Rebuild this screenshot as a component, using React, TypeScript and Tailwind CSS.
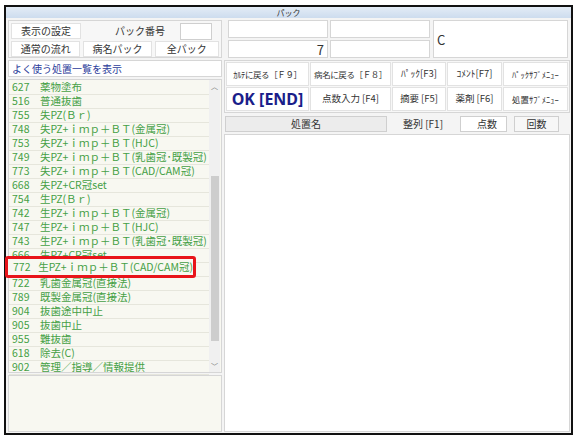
import React from "react";

const F = { fontFamily: '"Noto Sans CJK JP", "Noto Sans", sans-serif' };

const rows: [string, string][] = [
  ["627", "薬物塗布"],
  ["516", "普通抜歯"],
  ["755", "失PZ(Ｂｒ)"],
  ["748", "失PZ+ｉｍｐ＋ＢＴ(金属冠)"],
  ["753", "失PZ+ｉｍｐ＋ＢＴ(HJC)"],
  ["749", "失PZ+ｉｍｐ＋ＢＴ(乳歯冠･既製冠)"],
  ["773", "失PZ+ｉｍｐ＋ＢＴ(CAD/CAM冠)"],
  ["668", "失PZ+CR冠set"],
  ["754", "生PZ(Ｂｒ)"],
  ["742", "生PZ+ｉｍｐ＋ＢＴ(金属冠)"],
  ["747", "生PZ+ｉｍｐ＋ＢＴ(HJC)"],
  ["743", "生PZ+ｉｍｐ＋ＢＴ(乳歯冠･既製冠)"],
  ["666", "生PZ+CR冠set"],
  ["772", ""],
  ["722", "乳歯金属冠(直接法)"],
  ["789", "既製金属冠(直接法)"],
  ["904", "抜歯途中中止"],
  ["905", "抜歯中止"],
  ["955", "難抜歯"],
  ["618", "除去(C)"],
  ["902", "管理／指導／情報提供"],
];

function Btn({ children, className = "" }: { children: React.ReactNode; className?: string }) {
  return (
    <div className={`flex items-center justify-center bg-white border border-[#e2e2e2] text-[#333] leading-none whitespace-nowrap overflow-hidden ${className}`}>
      {children}
    </div>
  );
}

export default function App() {
  return (
    <div className="w-[577px] h-[439px] bg-white relative overflow-hidden" style={F}>
      <div className="absolute left-[4px] top-[5px] w-[569px] h-[430px] border-2 border-[#111] bg-[#f4f4f4] flex flex-col">
        {/* title bar */}
        <div className="h-[11px] bg-gradient-to-b from-[#e3ecf6] to-[#cddcee] flex items-center justify-center text-[8px] text-[#333] leading-none">
          パック
        </div>
        <div className="flex-1 flex gap-[2px] pl-[2px] pr-[1px] pt-[2px] pb-[1px]">
          {/* left column */}
          <div className="w-[214px] flex flex-col gap-[2px]">
            <div className="h-[38px] border border-[#d6d6d6] bg-[#f7f7f7] p-[2px] flex flex-col gap-[2px]">
              <div className="flex h-[16px] items-center">
                <Btn className="w-[70px] h-[16px] text-[10px]">表示の設定</Btn>
                <div className="w-[85px] text-right text-[10px] text-[#333] leading-none pr-[1px]">パック番号</div>
                <div className="ml-[14px] w-[32px] h-[17px] bg-white border border-[#cfcfcf]" />
              </div>
              <div className="flex h-[16px] gap-[3px]">
                <Btn className="w-[70px] h-[16px] text-[10px]">通常の流れ</Btn>
                <Btn className="w-[69px] h-[16px] text-[10px]">病名パック</Btn>
                <Btn className="w-[65px] h-[16px] text-[10px]">全パック</Btn>
              </div>
            </div>
            <div className="h-[17px] border border-[#d6d6d6] bg-white flex items-center pl-[3px] text-[10px] text-[#2c3c9a] leading-none">
              よく使う処置一覧を表示
            </div>
            <div className="h-[294px] border border-[#d6d6d6] bg-[#f8f8f1] flex relative">
              <div className="flex-1 pt-[1px]">
                {rows.map(([n, t]) => (
                  <div key={n} className="h-[14px] flex items-center border-b border-[#e6e6dc] text-[10.5px] text-[#45a045] leading-none whitespace-nowrap">
                    {t ? (
                      <>
                        <span className="w-[31px] pl-[3px]">{n}</span>
                        <span>{t}</span>
                      </>
                    ) : null}
                  </div>
                ))}
              </div>
              <div className="w-[11px] bg-[#f0f0f0] flex flex-col items-center mr-[1px]">
                <div className="h-[12px] text-[7px] text-[#777] leading-[12px]">︿</div>
                <div className="h-[84px]" />
                <div className="w-[8px] h-[165px] bg-[#cdcdcd]" />
                <div className="flex-1" />
                <div className="h-[12px] text-[7px] text-[#777] leading-[12px]">﹀</div>
              </div>
              {/* highlight annotation */}
              <div className="absolute left-[-4px] top-[176px] w-[191px] h-[22px] border-[3px] border-[#e8141a] rounded-[3px] bg-[#f8f8f1] flex items-center text-[10.5px] text-[#45a045] leading-none whitespace-nowrap">
                <span className="w-[32px] pl-[5px]">772</span>
                <span>生PZ+ｉｍｐ＋ＢＴ(CAD/CAM冠)</span>
              </div>
            </div>
            <div className="flex-1 border border-[#d6d6d6] bg-[#f8f8f1]" />
          </div>

          {/* right column */}
          <div className="flex-1 flex flex-col gap-[2px]">
            <div className="h-[38px] flex gap-[3px] pl-[4px]">
              <div className="grid grid-cols-2 grid-rows-2 gap-[2px] w-[202px]">
                <div className="bg-white border border-[#d6d6d6]" />
                <div className="bg-white border border-[#d6d6d6]" />
                <div className="bg-white border border-[#d6d6d6] flex items-center justify-end pr-[3px] text-[13px] text-[#333] leading-none">7</div>
                <div className="bg-white border border-[#d6d6d6]" />
              </div>
              <div className="flex-1 mr-[2px] bg-white border border-[#d6d6d6] flex items-center pl-[3px] text-[13px] text-[#333] leading-none">
                C
              </div>
            </div>
            <div className="h-[53px] border border-[#d6d6d6] bg-[#f7f7f7] p-[1px] flex flex-col gap-[1px]">
              <div className="flex-1 flex gap-[1px]">
                <Btn className="w-[83px] text-[8.5px] tracking-[-0.4px]">ｶﾙﾃに戻る［Ｆ９］</Btn>
                <Btn className="w-[81px] text-[8.5px] tracking-[-0.4px]">病名に戻る［Ｆ８］</Btn>
                <Btn className="w-[54px] text-[9.5px]">ﾊﾟｯｸ[F3]</Btn>
                <Btn className="w-[55px] text-[9.5px]">ｺﾒﾝﾄ[F7]</Btn>
                <Btn className="flex-1 text-[8.5px]">ﾊﾟｯｸｻﾌﾞﾒﾆｭｰ</Btn>
              </div>
              <div className="flex-1 flex gap-[1px]">
                <Btn className="w-[83px]">
                  <span className="text-[16px] font-bold text-[#1a1e8a]" style={{ fontFamily: '"Noto Sans", "Noto Sans CJK JP", sans-serif' }}>OK [END]</span>
                </Btn>
                <Btn className="w-[81px] text-[9.5px]">点数入力 [F4]</Btn>
                <Btn className="w-[54px] text-[9.5px]">摘要 [F5]</Btn>
                <Btn className="w-[55px] text-[9.5px]">薬剤 [F6]</Btn>
                <Btn className="flex-1 text-[8.5px]">処置ｻﾌﾞﾒﾆｭｰ</Btn>
              </div>
            </div>
            <div className="h-[17px] flex items-center text-[10px] text-[#333] leading-none">
              <div className="w-[162px] h-[16px] ml-[1px] bg-[#ececec] border border-[#cfcfcf] flex items-center justify-center">処置名</div>
              <div className="w-[68px] h-[16px] flex items-center justify-center ml-[2px]">整列 [F1]</div>
              <div className="w-[47px] h-[16px] ml-[3px] bg-white border border-[#cfcfcf] flex items-center justify-end pr-[9px]">点数</div>
              <div className="w-[45px] h-[16px] ml-[7px] bg-[#f7f7f7] border border-[#cfcfcf] flex items-center justify-center">回数</div>
            </div>
            <div className="flex-1 bg-white border border-[#d6d6d6]" />
          </div>
        </div>
      </div>
    </div>
  );
}
